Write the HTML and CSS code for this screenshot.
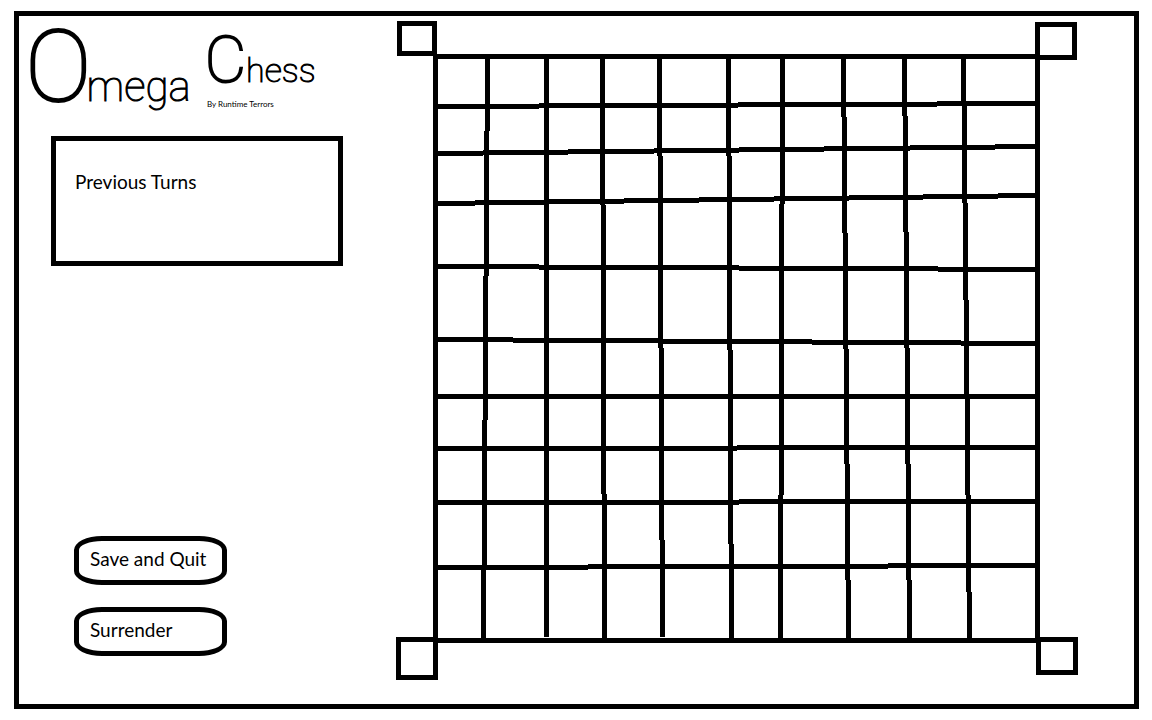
FILE: index.html
```html
<!DOCTYPE html>
<html lang="en">
<head>
<meta charset="utf-8">
<title>Omega Chess</title>
<link rel="stylesheet" href="styles.css">
</head>
<body>
<main class="frame">
  <aside class="sidebar">
    <header class="brand">
      <h1 class="title">
        <span class="word omega"><span class="cap">O</span>mega</span>
        <span class="word chess"><span class="cap">C</span>hess</span>
      </h1>
      <p class="byline">By Runtime Terrors</p>
    </header>
    <section class="turns">
      <h2 class="turns-title">Previous Turns</h2>
    </section>
    <div class="actions">
      <button class="action" type="button">Save and Quit</button>
      <button class="action" type="button">Surrender</button>
    </div>
  </aside>
  <svg class="board" viewBox="396 21 682 659" role="img" aria-label="Ten by ten board with four corner squares">
    <g transform="translate(.5 .5)" fill="none" stroke="#000" stroke-width="5" shape-rendering="crispEdges">
      <!-- corner squares -->
      <rect x="399" y="23" width="35" height="30"/>
      <rect x="1037" y="24" width="37" height="33"/>
      <rect x="398" y="639" width="37" height="38"/>
      <rect x="1038" y="639" width="37" height="33"/>
      <!-- outer edges -->
      <path d="M433 56H1039M433 640H1040M435 54V679M1037 22V641"/>
      <!-- rows -->
      <path d="M435 106H538M538 105H737M737 104H936M936 103H1037"/>
      <path d="M435 153H482M482 152H567M567 151H653M653 150H738M738 149H823M823 148H909M909 147H994M994 146H1037"/>
      <path d="M435 203H474M474 202H548M548 201H623M623 200H698M698 199H773M773 198H848M848 197H922M922 196H997M997 195H1037"/>
      <path d="M435 266H538M538 267H738M738 268H937M937 269H1037"/>
      <path d="M435 339H512M512 340H660M660 341H811M811 342H960M960 343H1037"/>
      <path d="M435 396H1037"/>
      <path d="M435 448H736M736 447H1037"/>
      <path d="M435 502H738M738 501H1037"/>
      <path d="M435 567H587M587 566H887M887 565H1037"/>
      <!-- columns -->
      <path d="M487 56V130M486 130V275M485 275V419M484 419V564M483 564V640"/>
      <path d="M546 56V636"/>
      <path d="M602 56V204M603 204V493M604 493V640"/>
      <path d="M659 56V155M660 155V347M661 347V539M662 539V636"/>
      <path d="M728 56V155M729 155V349M730 349V543M731 543V640"/>
      <path d="M782 56V203M781 203V494M780 494V640"/>
      <path d="M843 56V116M844 116V232M845 232V348M846 348V463M847 463V579M848 579V640"/>
      <path d="M904 56V115M905 115V231M906 231V347M907 347V463M908 463V579M909 579V640"/>
      <path d="M963 56V102M964 102V202M965 202V299M966 299V397M967 397V494M968 494V591M969 591V640"/>
    </g>
  </svg>
</main>
</body>
</html>
```
FILE: styles.css
```css
* { box-sizing: border-box; }

body {
  margin: 0;
  padding: 11px 13px 11px 14px;
  background: #fff;
  color: #000;
  font-family: Lato, "Open Sans", sans-serif;
}

.frame {
  display: grid;
  grid-template-columns: 377fr 682fr;
  padding: 5px 56px 24px 0;
  border: 5px solid #000;
}

.board { display: block; width: 100%; height: auto; }

.sidebar {
  display: flex;
  flex-direction: column;
  padding: 0 53px 24px 32px;
}

.brand { height: 115px; margin-left: -26px; }

.title {
  display: flex;
  gap: 14px;
  height: 78px;
  margin: 0;
  font-family: Roboto, sans-serif;
  font-weight: 100;
  -webkit-text-stroke: 1px #000;
}

.cap { -webkit-text-stroke: 2px #000; }

.word { white-space: nowrap; }
.omega { font-size: 42px; line-height: 92px; }
.omega .cap { margin-right: -5px; font-size: 100px; }
.chess { font-size: 34px; line-height: 80px; }
.chess .cap { font-size: 64px; }

.byline {
  margin: 0 0 0 182px;
  font-size: 8px;
  line-height: 10px;
}

.turns {
  min-height: 130px;
  padding: 29px 19px;
  border: 5px solid #000;
}

.turns-title {
  margin: 0;
  font-size: 19px;
  font-weight: 400;
  line-height: 24px;
}

.actions {
  display: flex;
  flex-direction: column;
  align-items: flex-start;
  gap: 22px;
  margin-top: auto;
  padding-left: 23px;
}

.action {
  width: 153px;
  height: 49px;
  padding: 0 0 4px 11px;
  border: 5px solid #000;
  border-radius: 28px / 14px;
  background: #fff;
  color: #000;
  font: 400 19px/24px Lato, "Open Sans", sans-serif;
  text-align: left;
  white-space: nowrap;
}
```
